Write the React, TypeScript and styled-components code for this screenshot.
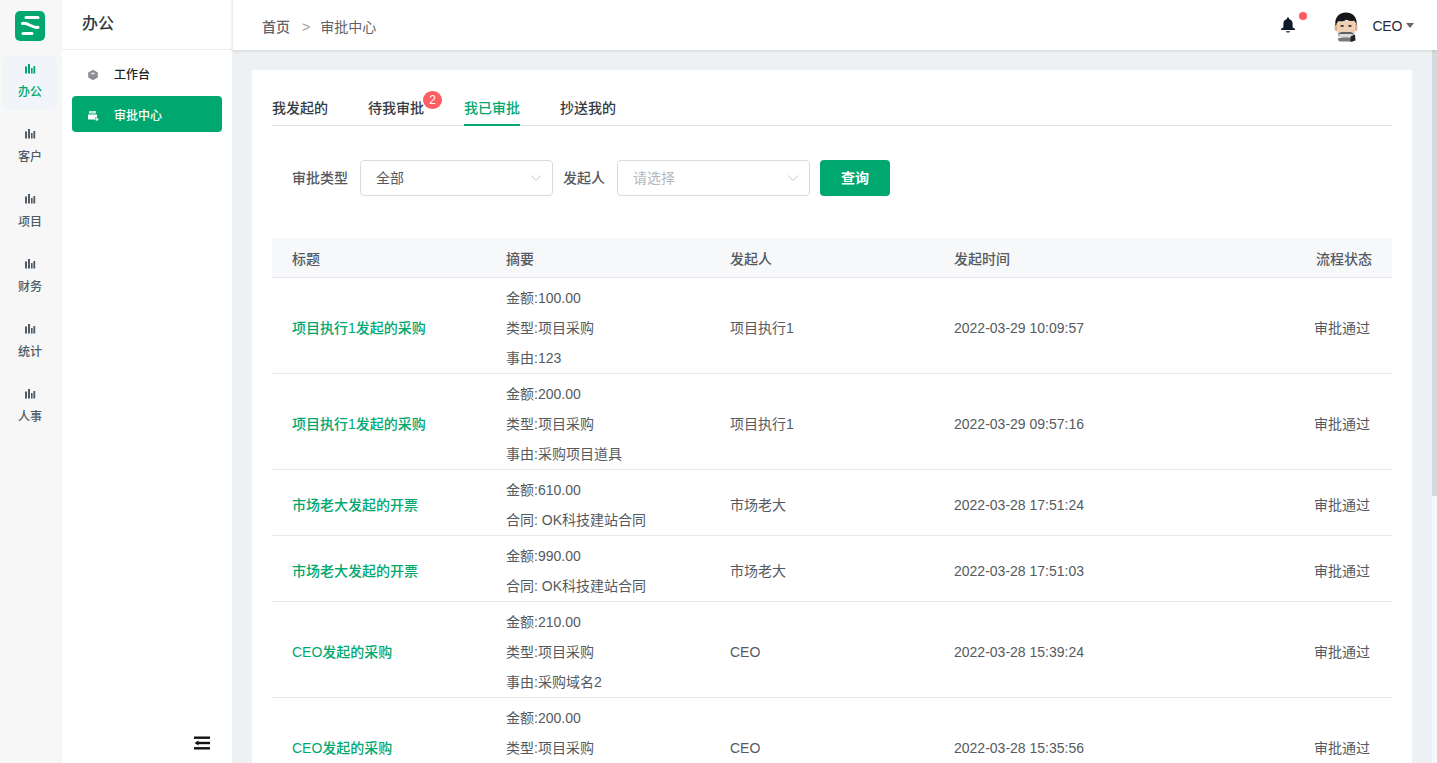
import React from 'react';
import styled, { createGlobalStyle } from 'styled-components';

const GlobalStyle = createGlobalStyle`
  html, body, #root {
    margin: 0;
    height: 100%;
  }
  body {
    font-family: "Liberation Sans", "Noto Sans CJK SC", sans-serif;
    font-size: 14px;
    line-height: 20px;
    color: #555a61;
    overflow: hidden;
  }
  * {
    box-sizing: border-box;
  }
`;

const GREEN = '#00a870';

const Layout = styled.div`
  display: flex;
  height: 100vh;
`;

const Rail = styled.aside`
  flex: 0 0 62px;
  display: flex;
  flex-direction: column;
  align-items: center;
  padding: 11px 2px 0 0;
  background: #f7f7f8;
`;

const LogoBox = styled.div`
  width: 30px;
  height: 30px;
  margin-bottom: 15px;
  border-radius: 5px;
  background: ${GREEN};
  display: flex;
`;

const RailItem = styled.div<{ $active?: boolean }>`
  width: 54px;
  height: 54px;
  margin-bottom: 11px;
  padding-top: 7px;
  border-radius: 6px;
  display: flex;
  flex-direction: column;
  align-items: center;
  gap: 8px;
  font-size: 12px;
  line-height: 18px;
  font-weight: 500;
  color: ${({ $active }) => ($active ? GREEN : '#4f5b67')};
  background: ${({ $active }) => ($active ? '#f1f5f9' : 'transparent')};
`;

const SubNav = styled.aside`
  flex: 0 0 170px;
  display: flex;
  flex-direction: column;
  background: #fff;
`;

const SubTitle = styled.div`
  height: 50px;
  padding: 0 0 2px 20px;
  display: flex;
  align-items: center;
  font-size: 16px;
  font-weight: 500;
  color: #333b44;
  border-bottom: 1px solid #eceef0;
`;

const SubList = styled.nav`
  flex: 1;
  padding: 5px 10px 0;
  display: flex;
  flex-direction: column;
  gap: 5px;
`;

const SubItem = styled.div<{ $active?: boolean }>`
  height: 36px;
  padding: 3px 0 0 15px;
  border-radius: 4px;
  display: flex;
  align-items: center;
  gap: 15px;
  font-size: 12px;
  font-weight: 500;
  color: ${({ $active }) => ($active ? '#fff' : '#222')};
  background: ${({ $active }) => ($active ? GREEN : 'transparent')};
`;

const CollapseRow = styled.div`
  height: 40px;
  padding-right: 22px;
  display: flex;
  justify-content: flex-end;
  align-items: center;
`;

const Content = styled.div`
  flex: 1;
  min-width: 0;
  display: flex;
  flex-direction: column;
`;

const TopBar = styled.header`
  position: relative;
  z-index: 1;
  flex: 0 0 50px;
  padding: 4px 23px 0 29px;
  display: flex;
  align-items: center;
  background: #fff;
  border-left: 1px solid #eceef0;
  box-shadow: 0 1px 3px rgba(0, 0, 0, 0.12);
`;

const Crumb = styled.span<{ $strong?: boolean }>`
  font-size: 14px;
  font-weight: ${({ $strong }) => ($strong ? 500 : 400)};
  color: #5f6368;
`;

const CrumbSep = styled.span`
  margin: 0 10px 0 12px;
  font-size: 14px;
  color: #a0a4a8;
`;

const TopRight = styled.div`
  margin-left: auto;
  display: flex;
  align-items: center;
`;

const BellWrap = styled.div`
  position: relative;
  width: 16px;
  height: 16px;
  margin: -4px 35px 0 0;
  display: flex;
`;

const BellDot = styled.span`
  position: absolute;
  top: -5px;
  right: -11px;
  width: 8px;
  height: 8px;
  border-radius: 50%;
  background: #ff5a5f;
`;

const UserName = styled.span`
  margin: 0 0 2px 12px;
  font-size: 14px;
  color: #1f2a37;
  letter-spacing: -0.3px;
`;

const Caret = styled.span`
  margin: 0 0 3px 4px;
  border-left: 4px solid transparent;
  border-right: 4px solid transparent;
  border-top: 5px solid #666;
`;

const MainArea = styled.div`
  flex: 1;
  min-height: 0;
  display: flex;
`;

const Main = styled.main`
  flex: 1;
  min-width: 0;
  overflow: hidden;
  padding: 20px;
  background: #eef1f3;
`;

const ScrollTrack = styled.div`
  flex: 0 0 5px;
  background: #f4f6fb;
`;

const ScrollThumb = styled.div`
  height: 446px;
  background: #d5d8dc;
`;

const Card = styled.section`
  padding: 20px;
  background: #fff;
`;

const Tabs = styled.div`
  display: flex;
  gap: 40px;
  height: 36px;
  border-bottom: 1px solid #dfe2e6;
`;

const Tab = styled.div<{ $active?: boolean }>`
  position: relative;
  height: 36px;
  line-height: 36px;
  font-size: 14px;
  font-weight: 500;
  color: ${({ $active }) => ($active ? GREEN : '#333b44')};
  border-bottom: 2px solid ${({ $active }) => ($active ? GREEN : 'transparent')};
`;

const Badge = styled.span`
  position: absolute;
  top: 1px;
  right: -18px;
  width: 19px;
  height: 18px;
  border-radius: 9px;
  background: #ff5f63;
  color: #fff;
  font-size: 12px;
  font-weight: 500;
  line-height: 18px;
  text-align: center;
`;

const Filters = styled.div`
  margin: 34px 0 42px;
  padding-left: 20px;
  display: flex;
  align-items: center;
`;

const FilterLabel = styled.label`
  margin-right: 12px;
  font-size: 14px;
  font-weight: 500;
  color: #555a61;
`;

const SelectBox = styled.div<{ $placeholder?: boolean }>`
  width: 193px;
  height: 36px;
  margin-right: 10px;
  padding: 0 9px 0 15px;
  display: flex;
  align-items: center;
  justify-content: space-between;
  border: 1px solid #d8dce2;
  border-radius: 4px;
  font-size: 14px;
  color: ${({ $placeholder }) => ($placeholder ? '#b4b8bd' : '#555a61')};
`;

const QueryButton = styled.button`
  width: 70px;
  height: 36px;
  padding: 0;
  border: none;
  border-radius: 4px;
  background: ${GREEN};
  color: #fff;
  font-family: inherit;
  font-size: 14px;
  line-height: 20px;
  font-weight: 700;
`;

const Row = styled.div`
  display: grid;
  grid-template-columns: 214px 224px 224px 1fr auto;
  align-items: center;
  padding: 0 20px;
`;

const HeadRow = styled(Row)`
  height: 40px;
  padding-top: 2px;
  background: #f7f8fa;
  border-bottom: 1px solid #e4e6ea;
  font-weight: 500;
  color: #555a61;
`;

const BodyRow = styled(Row)`
  padding-top: 5px;
  border-bottom: 1px solid #e8e9ef;
`;

const TitleLink = styled.a`
  font-weight: 500;
  color: ${GREEN};
`;

const SummaryLine = styled.div`
  line-height: 30px;
`;

const StatusCell = styled.div<{ $inset?: number }>`
  padding-right: ${({ $inset }) => $inset ?? 0}px;
`;

const BarsIcon = ({ color }: { color: string }) => (
  <svg width="12" height="12" viewBox="0 0 12 12" fill={color}>
    <rect x="1" y="3.5" width="2" height="7" />
    <rect x="4" y="1" width="2" height="9.5" />
    <rect x="7" y="5" width="1.6" height="5.5" />
    <rect x="9.4" y="3" width="1.8" height="7.5" />
  </svg>
);

const LogoMark = () => (
  <svg width="30" height="30" viewBox="0 0 30 30" fill="none" stroke="#fff" strokeWidth="3" strokeLinecap="round">
    <path d="M11 6.500h12" />
    <path d="M7.500 12.500c3-.8 5 .4 8 2s5 2.400 7.500 1.800" />
    <path d="M8 22.500h9" />
  </svg>
);

const CubeIcon = () => (
  <svg width="12" height="12" viewBox="0 0 12 12">
    <path d="M6 .8l4.800 2.600v5.200L6 11.200 1.200 8.600V3.400z" fill="#8a8d92" />
    <path d="M3.400 4.400L6 5.800l2.600-1.400L6 3.200z" fill="#d6d7d9" />
  </svg>
);

const PrinterIcon = () => (
  <svg width="12" height="12" viewBox="0 0 12 12" fill="#fff">
    <rect x="2" y="1" width="7" height="2.600" opacity="0.75" />
    <path d="M1 4.400h9v3.200H8v2H1z" />
    <circle cx="9.800" cy="9.300" r="1.500" opacity="0.85" />
  </svg>
);

const BellIcon = () => (
  <svg width="16" height="16" viewBox="0 0 16 16" fill="#0d1b2a">
    <path d="M8 .5c.7 0 1.100.4 1.100 1v.6c2.300.6 3.500 2.300 3.500 4.500v3.600l2.400 1.900v1H1v-1l2.400-1.900V6.600c0-2.200 1.200-3.900 3.500-4.500v-.6c0-.6.4-1 1.100-1z" />
    <path d="M6 14.200h4c0 .8-.9 1.400-2 1.400s-2-.6-2-1.400z" />
  </svg>
);

const Avatar = () => (
  <svg width="30" height="32" viewBox="0 0 30 32">
    <path d="M4 13h3v7H5c-1 0-1.500-1-1.500-3.500zM26 13h-3v7h2c1 0 1.500-1 1.500-3.500z" fill="#d9b18f" />
    <path d="M6 10h18v10c0 5-4 8-9 8s-9-3-9-8z" fill="#efd0b2" />
    <path d="M4.500 14.500C3 6 9 1.500 15 1.500S27 6 25.500 14.500c-.5-2-1.200-3.800-2.500-5-2.500 1.200-5 .5-7.500-.8-2.500 1.500-6 2-8 1.300-1.200 1.200-2 2.800-2.500 4.500z" fill="#17171a" />
    <rect x="9.400" y="14" width="3.400" height="1.800" rx="0.900" fill="#3a3330" />
    <rect x="17.200" y="14" width="3.400" height="1.800" rx="0.900" fill="#3a3330" />
    <path d="M7.500 22.500c2-2 4.500-1.500 7.500-1.500s5.500-.5 7.500 1.500v3c-3 1.500-12 1.500-15 0z" fill="#5f6165" />
    <rect x="7.500" y="23" width="15" height="3.200" rx="1.600" fill="#d8dadd" />
    <path d="M7 27h15v3.500H9c-1.500 0-2-2-2-3.500z" fill="#77797d" />
    <path d="M19.500 25.500l4.500-2 .5 6-5 1.500z" fill="#242426" />
  </svg>
);

const CollapseIcon = () => (
  <svg width="16" height="14" viewBox="0 0 16 14" fill="#111">
    <rect x="0" y="0.500" width="16" height="2.400" />
    <rect x="4" y="5.800" width="12" height="2.400" />
    <path d="M0.500 7L4.500 4.400v5.200z" />
    <rect x="0" y="11.100" width="16" height="2.400" />
  </svg>
);

const Chevron = () => (
  <svg width="14" height="14" viewBox="0 0 14 14" fill="none" stroke="#c2c6cc" strokeWidth="1">
    <path d="M2 4.500l5 5 5-5" />
  </svg>
);

const railItems = ['办公', '客户', '项目', '财务', '统计', '人事'];
const tabs = ['我发起的', '待我审批', '我已审批', '抄送我的'];

const rows = [
  {
    title: '项目执行1发起的采购',
    summary: ['金额:100.00', '类型:项目采购', '事由:123'],
    author: '项目执行1',
    time: '2022-03-29 10:09:57',
  },
  {
    title: '项目执行1发起的采购',
    summary: ['金额:200.00', '类型:项目采购', '事由:采购项目道具'],
    author: '项目执行1',
    time: '2022-03-29 09:57:16',
  },
  {
    title: '市场老大发起的开票',
    summary: ['金额:610.00', '合同: OK科技建站合同'],
    author: '市场老大',
    time: '2022-03-28 17:51:24',
  },
  {
    title: '市场老大发起的开票',
    summary: ['金额:990.00', '合同: OK科技建站合同'],
    author: '市场老大',
    time: '2022-03-28 17:51:03',
  },
  {
    title: 'CEO发起的采购',
    summary: ['金额:210.00', '类型:项目采购', '事由:采购域名2'],
    author: 'CEO',
    time: '2022-03-28 15:39:24',
  },
  {
    title: 'CEO发起的采购',
    summary: ['金额:200.00', '类型:项目采购', '事由:采购域名'],
    author: 'CEO',
    time: '2022-03-28 15:35:56',
  },
];

export default function App() {
  return (
    <Layout>
      <GlobalStyle />
      <Rail>
        <LogoBox>
          <LogoMark />
        </LogoBox>
        {railItems.map((name, i) => (
          <RailItem key={name} $active={i === 0}>
            <BarsIcon color={i === 0 ? GREEN : '#4f5b67'} />
            {name}
          </RailItem>
        ))}
      </Rail>

      <SubNav>
        <SubTitle>办公</SubTitle>
        <SubList>
          <SubItem>
            <CubeIcon />
            工作台
          </SubItem>
          <SubItem $active>
            <PrinterIcon />
            审批中心
          </SubItem>
        </SubList>
        <CollapseRow>
          <CollapseIcon />
        </CollapseRow>
      </SubNav>

      <Content>
        <TopBar>
          <Crumb $strong>首页</Crumb>
          <CrumbSep>&gt;</CrumbSep>
          <Crumb>审批中心</Crumb>
          <TopRight>
            <BellWrap>
              <BellIcon />
              <BellDot />
            </BellWrap>
            <Avatar />
            <UserName>CEO</UserName>
            <Caret />
          </TopRight>
        </TopBar>

        <MainArea>
          <Main>
            <Card>
              <Tabs>
                {tabs.map((t, i) => (
                  <Tab key={t} $active={i === 2}>
                    {t}
                    {i === 1 && <Badge>2</Badge>}
                  </Tab>
                ))}
              </Tabs>

              <Filters>
                <FilterLabel>审批类型</FilterLabel>
                <SelectBox>
                  全部
                  <Chevron />
                </SelectBox>
                <FilterLabel>发起人</FilterLabel>
                <SelectBox $placeholder>
                  请选择
                  <Chevron />
                </SelectBox>
                <QueryButton>查询</QueryButton>
              </Filters>

              <HeadRow>
                <div>标题</div>
                <div>摘要</div>
                <div>发起人</div>
                <div>发起时间</div>
                <StatusCell>流程状态</StatusCell>
              </HeadRow>

              {rows.map((r, i) => (
                <BodyRow key={i}>
                  <TitleLink>{r.title}</TitleLink>
                  <div>
                    {r.summary.map((line) => (
                      <SummaryLine key={line}>{line}</SummaryLine>
                    ))}
                  </div>
                  <div>{r.author}</div>
                  <div>{r.time}</div>
                  <StatusCell $inset={2}>审批通过</StatusCell>
                </BodyRow>
              ))}
            </Card>
          </Main>
          <ScrollTrack>
            <ScrollThumb />
          </ScrollTrack>
        </MainArea>
      </Content>
    </Layout>
  );
}
